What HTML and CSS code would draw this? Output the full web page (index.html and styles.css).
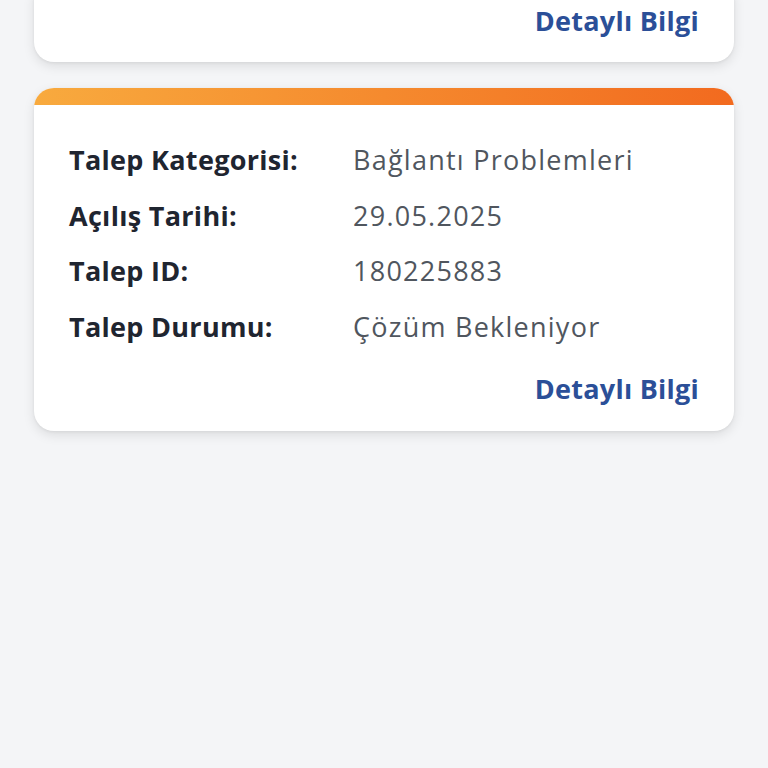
FILE: index.html
```html
<!DOCTYPE html>
<html lang="tr">
<head>
<meta charset="utf-8">
<link rel="stylesheet" href="styles.css">
</head>
<body>
<main class="list">
  <section class="card card-top">
    <div class="body">
      <a class="more" href="#">Detaylı Bilgi</a>
    </div>
  </section>
  <section class="card">
    <div class="bar"></div>
    <div class="body">
      <dl class="rows">
        <div class="row"><dt>Talep Kategorisi:</dt><dd>Bağlantı Problemleri</dd></div>
        <div class="row"><dt>Açılış Tarihi:</dt><dd>29.05.2025</dd></div>
        <div class="row"><dt>Talep ID:</dt><dd>180225883</dd></div>
        <div class="row"><dt>Talep Durumu:</dt><dd>Çözüm Bekleniyor</dd></div>
      </dl>
      <a class="more" href="#">Detaylı Bilgi</a>
    </div>
  </section>
</main>
</body>
</html>
```
FILE: styles.css
```css
html, body {
  margin: 0;
  padding: 0;
  background: #f4f5f7;
  height: 100%;
  overflow: hidden;
}
body {
  font-family: "Open Sans", Lato, sans-serif;
}
.list {
  display: flex;
  flex-direction: column;
  gap: 26px;
  padding: 0 34px;
  margin-top: -20px;
}
.card {
  background: #fff;
  border-radius: 20px;
  overflow: hidden;
  box-shadow: 0 4px 12px rgba(0, 0, 0, 0.10), 0 1px 3px rgba(0, 0, 0, 0.06);
}
.bar {
  height: 17px;
  background: linear-gradient(90deg, #f8aa3e 0%, #f58a2e 50%, #f26a1f 100%);
}
.body {
  display: flex;
  flex-direction: column;
  padding: 27px 35px 22px 35px;
}
.card-top .body {
  padding: 21px 35px 21px 35px;
}
.card-top .more {
  margin-top: 0;
}
.rows {
  margin: 0;
  display: flex;
  flex-direction: column;
}
.row {
  display: flex;
  align-items: center;
  height: 55.5px;
  font-size: 27px;
}
dt {
  width: 284px;
  font-weight: 700;
  color: #1f2530;
  letter-spacing: 0.3px;
}
dd {
  margin: 0;
  color: #50565e;
  font-weight: 400;
  letter-spacing: 1.25px;
}
.more {
  align-self: flex-end;
  margin-top: 15px;
  line-height: 40px;
  font-size: 27px;
  font-weight: 700;
  color: #2b4f98;
  text-decoration: none;
  letter-spacing: 0.25px;
}
```
